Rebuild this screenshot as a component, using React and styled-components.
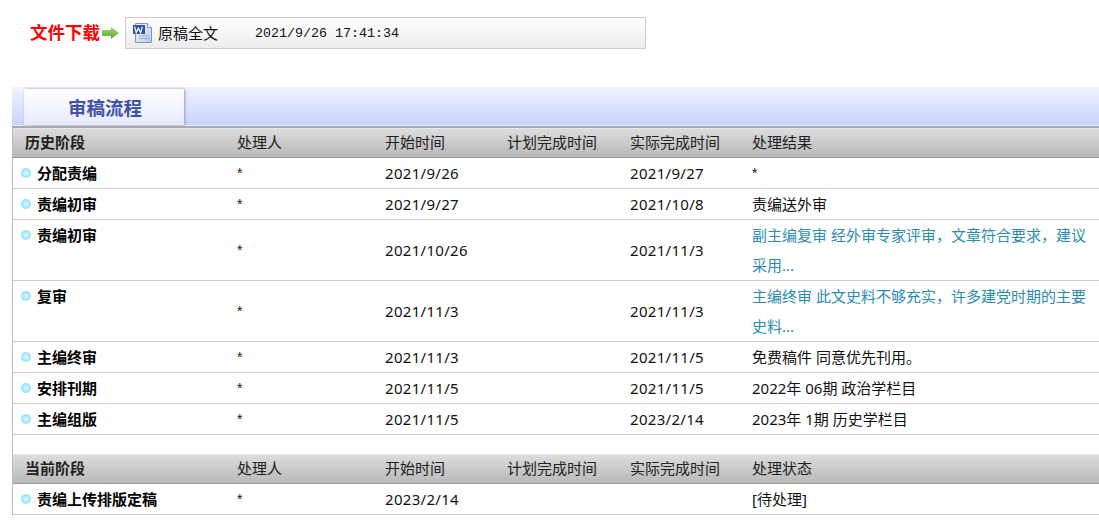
import React from 'react';
import styled, { createGlobalStyle } from 'styled-components';

const GlobalStyle = createGlobalStyle`
  html, body {
    margin: 0;
    padding: 0;
    background: #fff;
    overflow: hidden;
  }
  body {
    font-family: "Noto Sans", "Noto Sans CJK SC", sans-serif;
    font-size: 15px;
    color: #111;
  }
`;

const history = [
  { stage: '分配责编', start: '2021/9/26', end: '2021/9/27', result: '*' },
  { stage: '责编初审', start: '2021/9/27', end: '2021/10/8', result: '责编送外审' },
  {
    stage: '责编初审',
    start: '2021/10/26',
    end: '2021/11/3',
    result: '副主编复审 经外审专家评审，文章符合要求，建议采用...',
    tall: true,
  },
  {
    stage: '复审',
    start: '2021/11/3',
    end: '2021/11/3',
    result: '主编终审 此文史料不够充实，许多建党时期的主要史料...',
    tall: true,
  },
  { stage: '主编终审', start: '2021/11/3', end: '2021/11/5', result: '免费稿件 同意优先刊用。' },
  { stage: '安排刊期', start: '2021/11/5', end: '2021/11/5', result: '2022年 06期 政治学栏目' },
  { stage: '主编组版', start: '2021/11/5', end: '2023/2/14', result: '2023年 1期 历史学栏目' },
];

const WordIcon = () => (
  <svg width="21" height="20" viewBox="0 0 21 20">
    <defs>
      <linearGradient id="pageFill" x1="0" y1="0" x2="1" y2="1">
        <stop offset="0" stopColor="#f4f7fc" />
        <stop offset="1" stopColor="#b9cbe6" />
      </linearGradient>
    </defs>
    <path d="M3.5.5h12l4 4v15h-16z" fill="url(#pageFill)" stroke="#8299bd" />
    <path d="M15.5.5v4h4" fill="#fff" stroke="#8299bd" />
    <path d="M7 13h10M7 15.5h10" stroke="#93abd0" />
    <rect x="1" y="2" width="12" height="9" fill="#2d52ad" />
    <path d="M2.6 3.6l1.6 6 2.2-4.4 2.2 4.4 1.8-6" fill="none" stroke="#fff" strokeWidth="1.2" />
  </svg>
);

const GreenArrow = () => (
  <svg width="17" height="12" viewBox="0 0 17 12">
    <defs>
      <linearGradient id="arrowFill" x1="0" y1="0" x2="0" y2="1">
        <stop offset="0" stopColor="#a5dc6a" />
        <stop offset="1" stopColor="#5aa82a" />
      </linearGradient>
    </defs>
    <path d="M0 3h9V0l8 6-8 6V9H0z" fill="url(#arrowFill)" />
  </svg>
);

const Row = ({ item }) => (
  <TableRow $tall={item.tall}>
    <StageCell>
      <Dot />
      {item.stage}
    </StageCell>
    <Star>*</Star>
    <DateCell>{item.start}</DateCell>
    <div />
    <DateCell>{item.end}</DateCell>
    <ResultCell $tall={item.tall}>
      {item.result === '*' ? <Star>*</Star> : item.result}
    </ResultCell>
  </TableRow>
);

const Header = ({ stage, status }) => (
  <HeaderRow>
    <HeaderStage>{stage}</HeaderStage>
    <div>处理人</div>
    <div>开始时间</div>
    <div>计划完成时间</div>
    <div>实际完成时间</div>
    <div>{status}</div>
  </HeaderRow>
);

const App = () => (
  <Page>
    <GlobalStyle />
    <DownloadBar>
      <DownloadLabel>文件下载</DownloadLabel>
      <GreenArrow />
      <FileBox>
        <WordIcon />
        <FileName>原稿全文</FileName>
        <FileDate>2021/9/26 17:41:34</FileDate>
      </FileBox>
    </DownloadBar>
    <TabBand>
      <Tab>审稿流程</Tab>
    </TabBand>
    <Table>
      <Header stage="历史阶段" status="处理结果" />
      {history.map((item, i) => (
        <Row key={i} item={item} />
      ))}
      <Spacer />
      <Header stage="当前阶段" status="处理状态" />
      <Row item={{ stage: '责编上传排版定稿', start: '2023/2/14', result: '[待处理]' }} />
    </Table>
  </Page>
);

const columns = '224px 148px 122px 123px 122px 1fr';

const Page = styled.div`
  width: 1099px;
  height: 520px;
  overflow: hidden;
`;

const DownloadBar = styled.div`
  display: flex;
  align-items: center;
  height: 32px;
  margin: 17px 0 38px 30px;
`;

const DownloadLabel = styled.div`
  width: 72px;
  margin-top: -2px;
  font-size: 17.5px;
  font-weight: bold;
  line-height: 30px;
  color: #f00;
  white-space: nowrap;
`;

const FileBox = styled.div`
  display: flex;
  align-items: center;
  box-sizing: border-box;
  width: 521px;
  height: 32px;
  margin-left: 6px;
  padding-left: 6px;
  border: 1px solid #ccc;
  background: linear-gradient(#fff, #ececec);
`;

const FileName = styled.span`
  width: 97px;
  margin: -2px 0 0 5px;
  font-size: 15px;
`;

const FileDate = styled.span`
  font-family: "Liberation Mono", "Courier New", monospace;
  font-size: 13.33px;
`;

const TabBand = styled.div`
  display: flex;
  align-items: flex-end;
  box-sizing: border-box;
  height: 39px;
  margin-left: 12px;
  padding-left: 12px;
  background: linear-gradient(#f1f4fe, #c8d3fd);
  border-bottom: 1px solid #e6ebff;
`;

const Tab = styled.div`
  box-sizing: border-box;
  width: 160px;
  height: 36px;
  line-height: 38px;
  padding-left: 44px;
  font-size: 18.5px;
  font-weight: bold;
  color: #3f51a8;
  background: linear-gradient(#fff, #e6eafd);
  border-radius: 2px 2px 0 0;
  box-shadow: 1px 0 3px #8f9bc4;
`;

const Table = styled.div`
  margin-left: 12px;
  border-left: 1px solid #bbb;
  border-top: 2px solid #aaa;
`;

const HeaderRow = styled.div`
  display: grid;
  grid-template-columns: ${columns};
  align-items: center;
  box-sizing: border-box;
  height: 30px;
  padding-bottom: 4px;
  border-top: 1px solid #e8e8e8;
  border-bottom: 1px solid #999;
  background: linear-gradient(#dcdcdc, #b9b9b9);
  color: #222;
`;

const HeaderStage = styled.div`
  padding-left: 12px;
  font-weight: bold;
`;

const TableRow = styled.div`
  display: grid;
  grid-template-columns: ${columns};
  align-items: center;
  box-sizing: border-box;
  height: ${(p) => (p.$tall ? '61px' : '31px')};
  padding-bottom: ${(p) => (p.$tall ? '0' : '1px')};
  border-bottom: 1px solid #ccc;
`;

const Star = styled.div`
  font-family: "Liberation Sans", sans-serif;
  font-size: 14px;
`;

const DateCell = styled.div`
  letter-spacing: 0.3px;
`;

const StageCell = styled.div`
  align-self: start;
  display: flex;
  align-items: center;
  height: 29px;
  padding-left: 8px;
  font-weight: bold;
  color: #000;
`;

const Dot = styled.span`
  width: 10px;
  height: 10px;
  margin-right: 6px;
  border-radius: 50%;
  background: radial-gradient(circle at 50% 50%, #dff9ff, #6fd4f5);
`;

const ResultCell = styled.div`
  line-height: 30px;
  padding-right: 8px;
  color: ${(p) => (p.$tall ? '#2b8cb0' : '#111')};
`;

const Spacer = styled.div`
  height: 19px;
`;

export default App;
